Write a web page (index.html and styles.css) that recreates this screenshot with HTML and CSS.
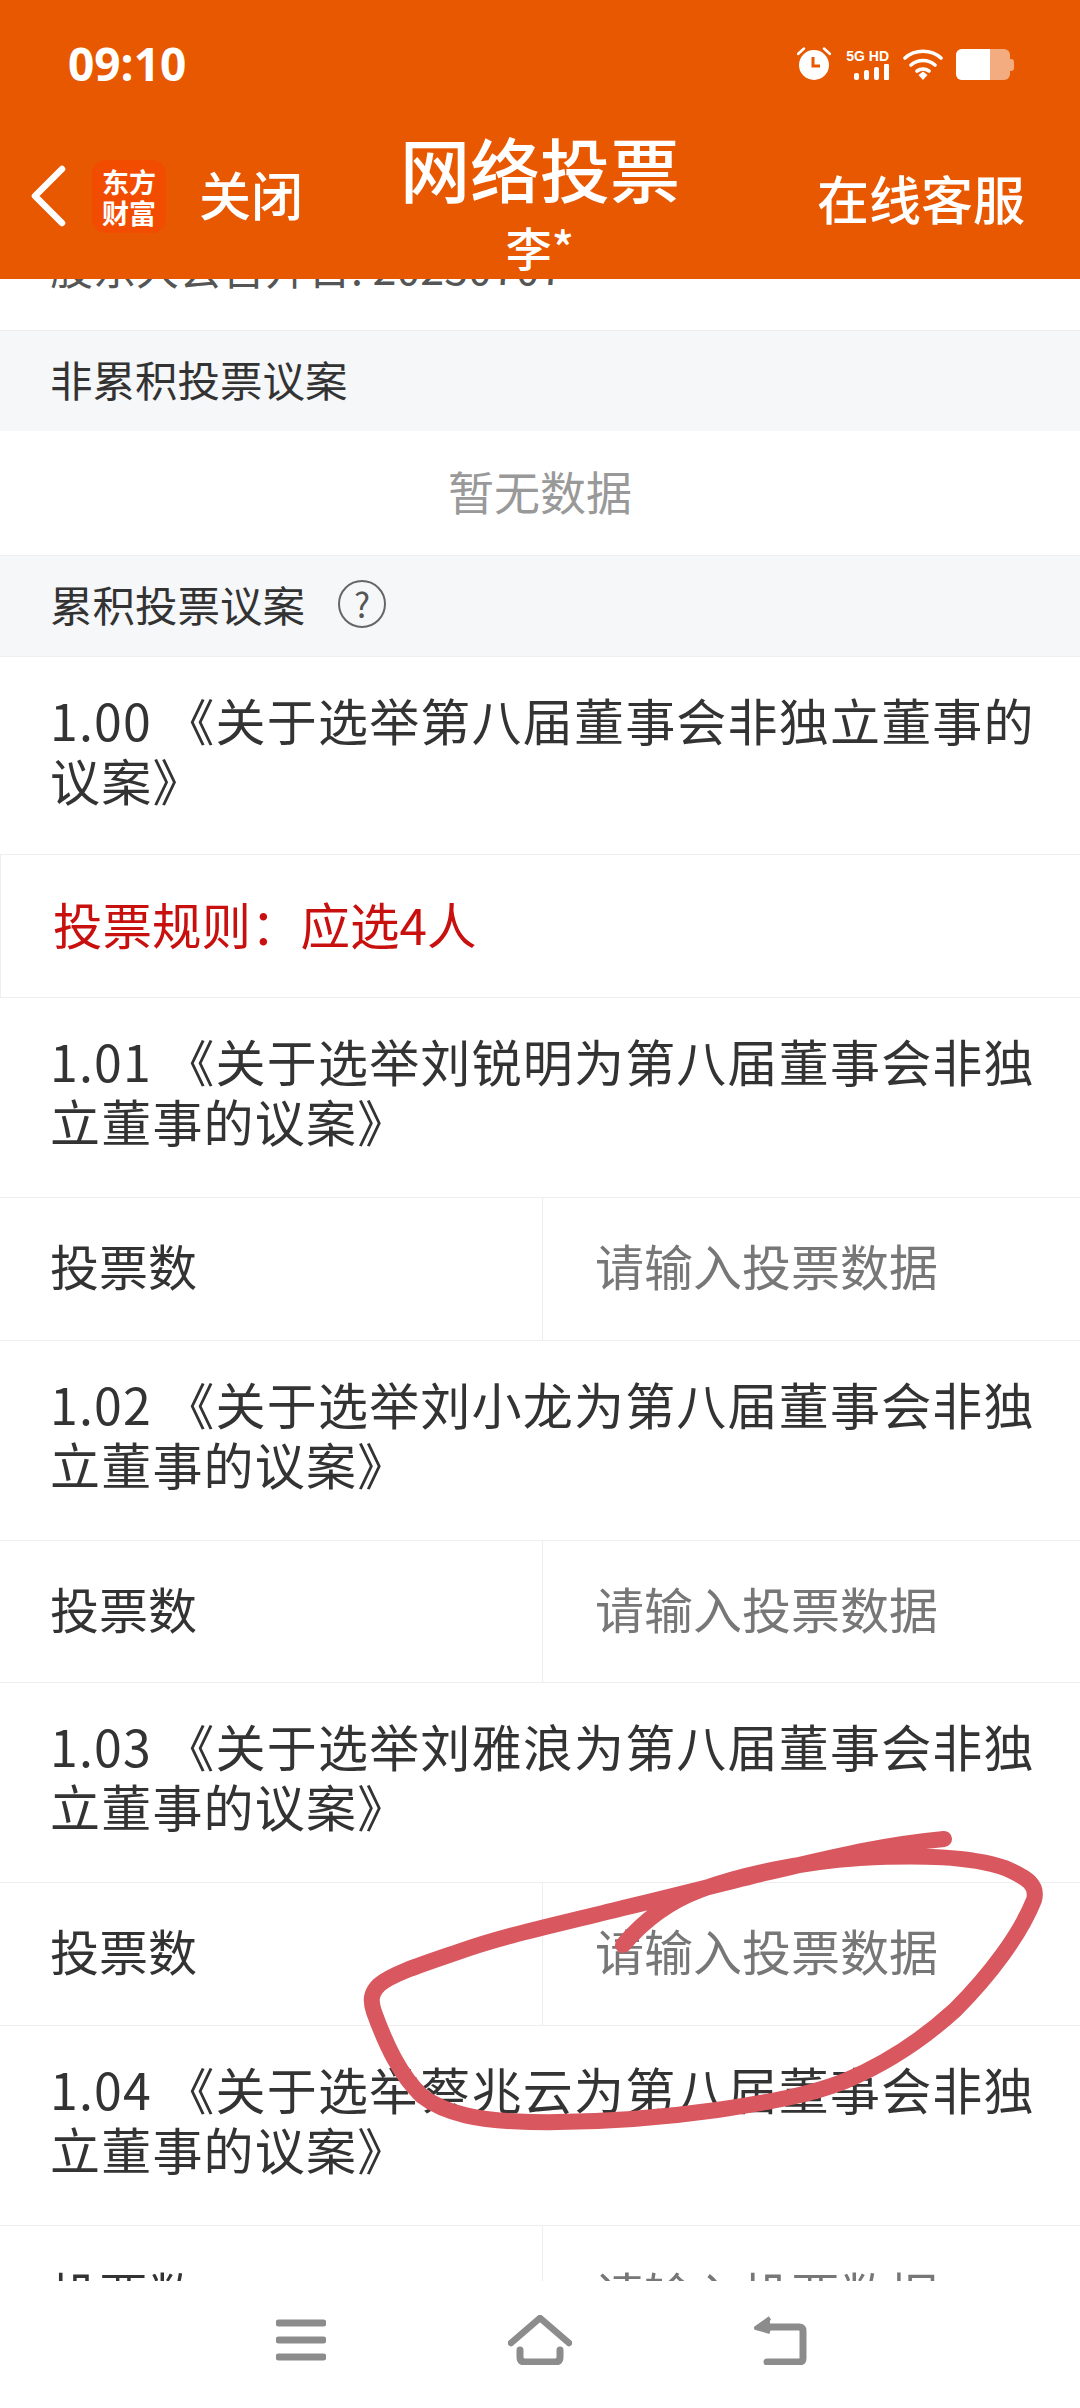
FILE: index.html
```html
<!DOCTYPE html>
<html lang="zh-CN">
<head>
    <meta charset="UTF-8">
    <meta name="viewport" content="width=device-width, initial-scale=1.0">
    <title>网络投票</title>
    <link rel="stylesheet" href="styles.css">
</head>
<body>
<div class="page">
    <header class="app-header">
        <div class="status-bar">
            <span class="clock">09:10</span>
            <div class="status-icons">
                <svg class="icon-alarm" viewBox="0 0 34 33" width="34" height="33">
                    <circle cx="17" cy="18" r="15" fill="#fff"/>
                    <path d="M1 7 7 1.5M33 7 27 1.5" stroke="#fff" stroke-width="2.5" stroke-linecap="round"/>
                    <path d="M16 10v9h7" fill="none" stroke="#e75800" stroke-width="3"/>
                </svg>
                <div class="signal">
                    <span class="signal-label">5G HD</span>
                    <svg viewBox="0 0 35 16" width="35" height="16">
                        <rect x="0" y="9" width="5" height="7" rx="2" fill="#fff"/>
                        <rect x="10" y="6" width="5" height="10" rx="2" fill="#fff"/>
                        <rect x="20" y="3" width="5" height="13" rx="2" fill="#fff"/>
                        <rect x="30" y="0" width="5" height="16" rx="1" fill="#fff"/>
                    </svg>
                </div>
                <svg class="icon-wifi" viewBox="0 0 40 32" width="40" height="32">
                    <path d="M2 10C12 1 28 1 38 10M8 17C15 11 25 11 32 17M14 23C17.500 20.500 22.500 20.500 26 23" fill="none" stroke="#fff" stroke-width="3.600" stroke-linecap="round"/>
                    <path d="M15.500 27 20 23.500 24.500 27 20 32Z" fill="#fff"/>
                </svg>
                <div class="battery">
                    <div class="battery-body"><div class="battery-level"></div></div>
                    <div class="battery-tip"></div>
                </div>
            </div>
        </div>
        <div class="toolbar">
            <div class="toolbar-left">
                <svg class="icon-back" viewBox="0 0 36 62" width="36" height="62">
                    <path d="M32 4 5 31l27 27" fill="none" stroke="#fff" stroke-width="6.500" stroke-linecap="round" stroke-linejoin="round"/>
                </svg>
                <div class="app-logo">东方<br>财富</div>
                <span class="close-link">关闭</span>
            </div>
            <div class="toolbar-title">
                <h1>网络投票</h1>
                <div class="user-name">李*</div>
            </div>
            <div class="toolbar-right">在线客服</div>
        </div>
    </header>

    <main class="content">
        <div class="info-row"><span>股东大会召开日: 20230707</span></div>

        <div class="section-title">非累积投票议案</div>
        <div class="empty-row">暂无数据</div>

        <div class="section-title">
            累积投票议案
            <span class="help-icon">?</span>
        </div>

        <div class="motion motion-head">1.00 《关于选举第八届董事会非独立董事的议案》</div>
        <div class="rule-row">投票规则：应选4人</div>

        <div class="motion">1.01 《关于选举刘锐明为第八届董事会非独立董事的议案》</div>
        <div class="vote-row">
            <div class="vote-label">投票数</div>
            <div class="vote-input">请输入投票数据</div>
        </div>

        <div class="motion">1.02 《关于选举刘小龙为第八届董事会非独立董事的议案》</div>
        <div class="vote-row">
            <div class="vote-label">投票数</div>
            <div class="vote-input">请输入投票数据</div>
        </div>

        <div class="motion">1.03 《关于选举刘雅浪为第八届董事会非独立董事的议案》</div>
        <div class="vote-row">
            <div class="vote-label">投票数</div>
            <div class="vote-input">请输入投票数据</div>
        </div>

        <div class="motion">1.04 《关于选举蔡兆云为第八届董事会非独立董事的议案》</div>
        <div class="vote-row">
            <div class="vote-label">投票数</div>
            <div class="vote-input">请输入投票数据</div>
        </div>
    </main>

    <nav class="nav-bar">
        <svg viewBox="0 0 50 44" width="50" height="44">
            <path d="M3 5h44M3 22h44M3 39h44" stroke="#8c8c8c" stroke-width="7" stroke-linecap="round"/>
        </svg>
        <svg viewBox="0 0 64 50" width="64" height="50">
            <path d="M3 28 32 3l29 25" fill="none" stroke="#8c8c8c" stroke-width="6.500" stroke-linecap="round" stroke-linejoin="round"/>
            <path d="M12 35v7q0 5 5 5h30q5 0 5-5v-7" fill="none" stroke="#8c8c8c" stroke-width="7" stroke-linecap="round"/>
        </svg>
        <svg viewBox="0 0 54 50" width="54" height="50">
            <path d="M12 12h34q4 0 4 4v27q0 4-4 4H14" fill="none" stroke="#8c8c8c" stroke-width="7" stroke-linecap="round"/>
            <path d="M17 3 3 13l14 4" fill="#8c8c8c" stroke="#8c8c8c" stroke-width="4" stroke-linejoin="round"/>
        </svg>
    </nav>

    <!-- hand drawn mark on top of the screenshot -->
    <svg class="pen-mark" viewBox="0 0 1080 2408" width="1080" height="2408">
        <path d="M944 1839C880 1845 830 1858 765 1873C720 1884 670 1897 623 1908C560 1924 505 1935 458 1952C420 1965 392 1974 379 1985C371 1993 370 2000 374 2012C386 2045 400 2075 422 2096C445 2114 480 2121 530 2122C590 2123 660 2118 717 2110C770 2102 810 2095 845 2081C885 2064 920 2042 955 2010C990 1975 1020 1935 1034 1900C1038 1885 1028 1878 1005 1868C970 1856 920 1855 860 1858C800 1862 740 1875 700 1890C665 1903 640 1925 623 1945" fill="none" stroke="#d9575e" stroke-width="16" stroke-linecap="round" stroke-linejoin="round"/>
    </svg>
</div>
</body>
</html>
```

FILE: styles.css
```css
/* Page */
* {
    box-sizing: border-box;
}

body {
    margin: 0;
    background: #fff;
    color: #333;
    font-family: "Noto Sans CJK SC", sans-serif;
}

.page {
    position: relative;
    display: flex;
    flex-direction: column;
    width: 1080px;
    height: 2408px;
    overflow: hidden;
}

/* Orange header */
.app-header {
    flex: none;
    height: 279px;
    background: #e75800;
    color: #fff;
}

.status-bar {
    display: flex;
    justify-content: space-between;
    align-items: center;
    height: 126px;
    padding: 0 66px 0 68px;
}

.clock {
    font-family: "Open Sans", sans-serif;
    font-size: 46px;
    font-weight: 700;
}

.status-icons {
    display: flex;
    align-items: flex-end;
    gap: 10px;
    height: 34px;
}

.signal {
    display: flex;
    flex-direction: column;
    align-items: flex-end;
    width: 48px;
    margin-right: 4px;
}

.signal-label {
    font-family: "Liberation Sans", sans-serif;
    font-size: 14px;
    font-weight: 700;
    line-height: 16px;
    white-space: nowrap;
}

.icon-wifi {
    margin-right: 3px;
}

.battery {
    display: flex;
    align-items: center;
    height: 31px;
}

.battery-body {
    width: 54px;
    height: 31px;
    border-radius: 6px;
    background: rgba(255, 255, 255, 0.5);
    overflow: hidden;
}

.battery-level {
    width: 34px;
    height: 100%;
    background: #fff;
}

.battery-tip {
    width: 4px;
    height: 12px;
    border-radius: 0 3px 3px 0;
    background: rgba(255, 255, 255, 0.5);
}

.toolbar {
    display: grid;
    grid-template-columns: minmax(0, 1fr) auto minmax(0, 1fr);
    height: 153px;
    padding: 0 30px;
}

.toolbar-left {
    display: flex;
    align-items: center;
    height: 140px;
}

.icon-back {
    margin-right: 26px;
}

.app-logo {
    flex: none;
    width: 74px;
    height: 73px;
    border-radius: 14px;
    background: #f24c00;
    font-size: 27px;
    font-weight: 700;
    line-height: 31px;
    text-align: center;
    padding-top: 6px;
}

.close-link {
    margin: 0 0 6px 33px;
    font-size: 52px;
    font-weight: 500;
}

.toolbar-title {
    text-align: center;
    margin-top: 2px;
}

.toolbar-title h1 {
    margin: 0;
    font-size: 70px;
    font-weight: 500;
    line-height: 80px;
}

.user-name {
    font-size: 46px;
    font-weight: 500;
    line-height: 58px;
    margin-top: 9px;
}

.toolbar-right {
    justify-self: end;
    margin-right: 25px;
    font-size: 52px;
    font-weight: 500;
    line-height: 144px;
}

/* Scrolling list */
.content {
    flex: 1;
    min-height: 0;
    overflow: hidden;
}

.info-row {
    display: flex;
    align-items: flex-end;
    height: 51px;
    padding: 0 50px 36px;
    overflow: hidden;
    font-size: 43px;
    line-height: 56px;
    white-space: nowrap;
    color: #555;
}

.section-title {
    display: flex;
    align-items: center;
    height: 101px;
    padding: 0 50px 5px;
    border-top: 1px solid #eee;
    background: #f6f7f9;
    font-size: 42.5px;
}

.help-icon {
    display: flex;
    justify-content: center;
    align-items: center;
    width: 48px;
    height: 48px;
    margin-left: 33px;
    border: 2px solid #666;
    border-radius: 50%;
    color: #555;
    font-size: 34px;
}

.empty-row {
    height: 124px;
    line-height: 118px;
    text-align: center;
    color: #999;
    font-size: 46px;
}

.motion {
    height: 200px;
    padding: 32px 40px 0 50px;
    border-top: 1px solid #eee;
    font-size: 50px;
    letter-spacing: 1.2px;
    line-height: 60px;
}

.motion-head {
    height: 198px;
}

.rule-row {
    display: flex;
    align-items: center;
    height: 143px;
    padding: 0 0 6px 52px;
    border-top: 1px solid #eee;
    border-left: 1px solid #eee;
    color: #c8100f;
    font-size: 49.5px;
}

.vote-row {
    display: flex;
    height: 142.5px;
    border-top: 1px solid #eee;
    font-size: 49px;
}

.vote-label {
    display: flex;
    align-items: center;
    width: 543px;
    padding: 0 0 8px 50px;
    border-right: 1px solid #eee;
}

.vote-input {
    display: flex;
    align-items: center;
    padding: 0 0 8px 52px;
    color: #777;
}

/* Bottom navigation */
.nav-bar {
    flex: none;
    display: flex;
    align-items: center;
    height: 127px;
    padding: 34px 273px 43px 276px;
    justify-content: space-between;
    background: #fff;
}

/* Pen stroke */
.pen-mark {
    position: absolute;
    top: 0;
    left: 0;
    pointer-events: none;
}
```
